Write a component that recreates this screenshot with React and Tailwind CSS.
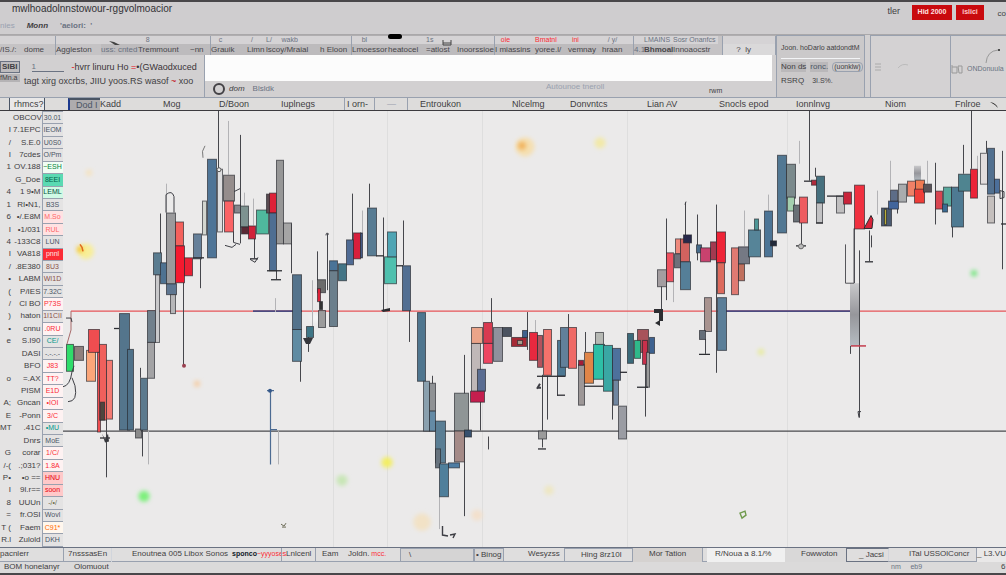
import clsx from 'clsx';

// [top label, main label, tone]
const tools = [
  ['', '/IS./:'],
  ['', 'dome'],
  ['', 'Aggleston'],
  ['', 'uss: cnted', 'faint'],
  ['    8', 'Tremmount'],
  ['', '~nn'],
  ['    c', 'Grauik'],
  ['  /', 'Limn'],
  ['L/     wakb', 'lscoy/Mraial'],
  ['', 'h Eloon'],
  ['     bl', 'Lmoessor'],
  ['', 'heatocel'],
  ['1s', '=atlost'],
  ['', 'Inoorssioe'],
  ['   oie', 'I miassins', 'red'],
  ['Bmatnl', 'yoree.l/', 'red'],
  ['  ini', 'vemnay', 'red'],
  ['   / y/', 'hraan'],
  ['', '4.1', 'faint'],
  ['LMAINS', 'Bhmoal', 'dark'],
  ['Sosr Onanfcs', 'Innoaocstr'],
  ['', '      ?  ly'],
];

const tabs = [
  { label: '' },
  { label: 'rhmcs?', look: 'border-x border-gray-600 pl-1 bg-[#e9e8e8]' },
  { label: '' },
  { label: 'Dod I', look: 'border-l-2 border-l-blue-900 border-t-2 border-t-gray-600 bg-[#aeacae] pl-1.5 leading-[10px] text-gray-600' },
  { label: 'Kadd' },
  { label: 'Mog' },
  { label: 'D/Boon' },
  { label: 'Iuplnegs' },
  { label: 'I orn-', look: 'border-x border-gray-400 pl-0.5 mr-3' },
  { label: '—', look: 'border-r border-gray-400 text-gray-400 mr-3' },
  { label: 'Entroukon' },
  { label: 'Nlcelmg' },
  { label: 'Donvntcs' },
  { label: 'Lian AV' },
  { label: 'Snocls epod' },
  { label: 'Ionnlnvg' },
  { label: 'Niom' },
  { label: 'Fnlroe' },
];

// [mark, name, value, tone]
const rows = [
  ['', 'OBCOV', '30.01', 'gray'],
  ['I', '7.1EPC', 'IEOM', 'gray'],
  ['/', 'S.E.0', 'U0S0', 'gray'],
  ['I', '7cdes', 'O/Pm', 'gray'],
  ['1', 'OV.188', '~ESH', 'lime'],
  ['', 'G_Doe', '8EEI', 'green'],
  ['4', '1 9•M', 'LEML', 'teal'],
  ['1', 'RI•N1,', 'B3S', 'gray'],
  ['6', '•/.E8M', 'M.So', 'pink'],
  ['I', '•1/031', 'RUL', 'pink'],
  ['4', '-133C8', 'LUN', 'gray'],
  ['I', 'VA818', 'pnnl', 'red'],
  ['/', '.8E380', '8U3', 'brown'],
  ['•', 'LABM', 'WI1D', 'brown'],
  ['(', 'P/IES', '7.32C', 'gray'],
  ['/', 'Cl BO', 'P73S', 'rose'],
  [')', 'haton', '1I1CII', 'brown'],
  ['•', 'cnnu', '.0RU', 'rose'],
  ['e', 'S.I90', 'CE/', 'teal2'],
  ['', 'DASI', '-.-.-.-', 'gray'],
  ['', 'BFO', 'J83', 'rose'],
  ['o', '=.AX', 'TT?', 'rose'],
  ['', 'PISM', 'E1D', 'rose'],
  ['A;', 'Gncan', '•IOI', 'rose'],
  ['E', '-Ponn', '3/C', 'rose'],
  ['MT', '.41C', '•MU', 'teal2'],
  ['', 'Dnrs', 'MoE', 'gray'],
  ['G', 'corar', '1/C/', 'rose'],
  ['/-(', '.;031?', '1.8A', 'rose'],
  ['P•', '•o ==', 'HNU', 'redbox'],
  ['I', '9l.r==', 'soon', 'redbox'],
  ['8', 'UUUn', '-/•/', 'olive'],
  ['=', 'fr.OSI', 'Wovl', 'gray'],
  ['T (', 'Faem', 'C91*', 'orange'],
  ['R.l', 'Zulold', 'DKH', 'gray'],
];

const tones = {
  gray: 'text-gray-600',
  lime: 'text-green-700 bg-green-50',
  green: 'text-emerald-800 bg-emerald-400/60',
  teal: 'text-emerald-900 bg-emerald-100',
  teal2: 'text-teal-600',
  pink: 'text-red-400 bg-red-100',
  red: 'text-red-100 bg-red-500',
  redbox: 'text-red-600 bg-red-200',
  rose: 'text-red-500 bg-red-50',
  brown: 'text-[#8a5048]',
  orange: 'text-orange-500 bg-orange-50',
  olive: 'text-[#6f6f48]',
};

const statusItems = [
  { label: 'pacnlerr' },
  { label: '7nsssasEn', look: 'border-l border-gray-400 pl-1' },
  { label: '', look: 'border-l border-gray-300' },
  { label: 'Enoutnea 005 Libox Sonos', extra: 'sponco', red: '~yyyoses' },
  { label: 'Lnlcenl', look: 'border-x border-gray-400 pl-1' },
  { label: 'Eam', look: 'pl-1.5' },
  { label: 'Joldn.', red: ' mcc.' },
  { label: '\\', look: 'border border-gray-400 pl-2 bg-[#d5d4d4]' },
  { label: '• Binog', look: 'border border-gray-400 pl-px bg-[#d5d4d4]' },
  { label: 'Wesyzss', look: 'pl-6' },
  { label: 'Hing 8rz10l', look: 'border-l border-t border-gray-400 pl-4' },
  { label: 'Mor Tation', look: 'border-x border-gray-400 pl-4 bg-[#d5d2d0]' },
  { label: 'R/Noua a 8.1/%', look: 'bg-[#f0f0f0] pl-2 ml-1' },
  { label: 'Fowwoton', look: 'pl-4 bg-[#d9d8d8]' },
  { label: '_ Jacsi', look: 'border border-gray-500 border-r-gray-300 pl-3' },
  { label: 'ITal USSOlConcr', look: 'pl-5' },
  { label: '_ L3.VU', look: 'border-l border-gray-400 bg-[#e9e8e8]' },
];

// [x, y, width, height, colour]
const candles = [
  [86, 350, 9, 31, '#fba679'], [88, 329, 11, 23, '#ef4d50'], [97, 352, 3, 80, '#ef4d50'], [99, 344, 7, 76, '#f0605c'],
  [106, 360, 6, 59, '#f47a72'], [100, 402, 4, 18, '#4d463e'], [66, 344, 7, 27, '#2fdc6a'], [74, 346, 9, 14, '#8f807d'],
  [119, 313, 10, 117, '#54758c'], [127, 349, 6, 81, '#4f7189'], [135, 429, 6, 9, '#8a8a8a'], [140, 378, 7, 52, '#5c7a8e'],
  [147, 310, 8, 32, '#71808c'], [147, 342, 7, 36, '#a3a3a5'], [155, 274, 4, 68, '#c9c9cb'],
  [153, 252, 8, 22, '#5a7c90'], [160, 262, 7, 21, '#4e7291'], [166, 283, 10, 11, '#5e7690'], [166, 212, 9, 71, '#9a9a9c'],
  [175, 221, 8, 24, '#f4615c'], [175, 245, 9, 37, '#f5192f'], [184, 257, 8, 18, '#ea2034'], [170, 294, 5, 19, '#b6b6b8'],
  [193, 233, 8, 25, '#66809a'], [202, 200, 4, 34, '#d3d6d0'], [207, 158, 9, 99, '#4f7597'], [217, 168, 5, 63, '#dededf'],
  [223, 174, 11, 26, '#958d8c'], [224, 200, 9, 31, '#fb6365'], [234, 204, 6, 8, '#85858b'], [240, 205, 8, 21, '#7d9290'],
  [241, 226, 7, 7, '#5a2a35'], [256, 209, 12, 24, '#4fb99d'], [248, 225, 7, 13, '#d0233a'], [266, 193, 3, 19, '#5a4a50'],
  [269, 192, 7, 20, '#dd2238'], [269, 212, 7, 58, '#4e6e92'], [276, 159, 7, 84, '#979797'], [283, 222, 8, 21, '#a5a5a5'],
  [292, 274, 9, 55, '#54738c'], [292, 329, 9, 32, '#5f8ba2'], [306, 326, 7, 11, '#3f7686'], [317, 279, 8, 13, '#6b6b6b'],
  [317, 288, 3, 13, '#dd2238'], [319, 301, 3, 8, '#333333'], [318, 310, 7, 17, '#9c9c9c'], [329, 260, 8, 10, '#4a7397'],
  [329, 270, 8, 56, '#6b7f8c'], [338, 263, 8, 17, '#437586'], [346, 239, 7, 25, '#4f6b94'], [353, 232, 7, 26, '#d81f3c'],
  [360, 232, 2, 25, '#465a86'], [367, 207, 9, 48, '#587c93'], [384, 256, 12, 27, '#4fc0ae'], [387, 231, 9, 25, '#4fa5b4'],
  [402, 265, 8, 45, '#526f92'], [417, 312, 8, 69, '#4f768f'], [423, 381, 6, 50, '#8aa0ae'], [429, 383, 6, 28, '#8f9295'],
  [429, 411, 6, 20, '#648aa5'], [435, 421, 10, 42, '#5a7e94'], [435, 449, 5, 19, '#66727d'], [448, 463, 11, 5, '#4f7da3'],
  [439, 464, 9, 33, '#4f7f9b'], [454, 393, 14, 38, '#8f9596'], [454, 431, 10, 31, '#a48a87'], [464, 430, 7, 7, '#37506e'],
  [471, 343, 9, 48, '#c0b8b8'], [471, 327, 11, 16, '#eba489'], [483, 322, 9, 21, '#d83a50'], [483, 343, 9, 20, '#ee4661'],
  [493, 327, 9, 34, '#8f919c'], [477, 369, 8, 22, '#5a6d92'], [470, 391, 14, 11, '#c41e4e'], [502, 327, 9, 9, '#4b5360'],
  [511, 337, 15, 9, '#a52a35'], [517, 340, 5, 4, '#a8a090'], [522, 330, 5, 7, '#3f628d'], [529, 332, 8, 28, '#e8293f'],
  [537, 335, 5, 32, '#b3525c'], [543, 329, 8, 46, '#f4726b'], [538, 431, 8, 8, '#9b9b9b'], [557, 340, 8, 36, '#4d7893'],
  [560, 327, 8, 40, '#62809a'], [568, 327, 8, 41, '#ef6a66'], [578, 364, 6, 41, '#9d9797'], [578, 360, 5, 5, '#a31c38'],
  [584, 352, 9, 31, '#e08548'], [595, 332, 8, 12, '#b6b9b4'], [593, 344, 11, 35, '#2dbfa6'], [603, 345, 9, 46, '#3aa7a4'],
  [612, 348, 8, 32, '#4d719c'], [613, 380, 5, 25, '#7086a0'], [618, 406, 8, 33, '#9a9ca3'], [627, 333, 6, 30, '#3b6a7a'],
  [637, 329, 11, 23, '#a8535a'], [634, 340, 6, 18, '#2fb98a'], [642, 340, 5, 24, '#c8304b'], [646, 352, 3, 35, '#9b9b9b'],
  [649, 337, 5, 16, '#3e6290'], [657, 269, 9, 17, '#a39da0'], [666, 252, 7, 29, '#ef5260'], [675, 238, 5, 15, '#ef8a7d'],
  [674, 253, 6, 14, '#70707a'], [680, 238, 9, 23, '#d2625f'], [683, 234, 8, 8, '#27284a'], [680, 261, 10, 28, '#557f98'],
  [696, 244, 5, 8, '#456a89'], [700, 247, 10, 14, '#c8426e'], [710, 241, 6, 18, '#a33a50'], [716, 231, 9, 31, '#ee2437'],
  [717, 262, 7, 31, '#dd6a5c'], [717, 297, 9, 53, '#5b7f99'], [704, 297, 7, 34, '#a8938f'], [699, 330, 6, 9, '#666f79'],
  [731, 247, 7, 47, '#e07a72'], [738, 263, 6, 17, '#c0705e'], [738, 246, 11, 17, '#757984'], [748, 229, 12, 27, '#568498'],
  [754, 218, 4, 11, '#4f9696'], [764, 210, 8, 46, '#4d7596'], [770, 240, 6, 5, '#222a3a'], [777, 154, 9, 78, '#527893'],
  [786, 163, 9, 34, '#7b8a8c'], [787, 196, 7, 14, '#a4cfae'], [793, 204, 6, 17, '#697076'], [799, 196, 8, 26, '#ee5c60'],
  [811, 179, 5, 5, '#b02a3b'], [816, 175, 8, 27, '#46707e'], [816, 202, 6, 20, '#c2c2c4'], [836, 195, 8, 17, '#c0bfc0'],
  [843, 191, 8, 12, '#c9243a'], [854, 184, 10, 44, '#f0303f'], [881, 207, 10, 18, '#4a5a70'], [884, 208, 2, 16, '#b9ae3a'],
  [888, 200, 10, 8, '#41659c'], [890, 189, 7, 11, '#5d6d88'], [898, 183, 8, 18, '#a9acae'], [907, 180, 8, 15, '#f08066'],
  [915, 179, 9, 13, '#f07a52'], [914, 188, 10, 14, '#ef3d38'], [923, 183, 8, 8, '#5a5358'], [935, 190, 7, 18, '#d84550'],
  [943, 186, 8, 19, '#58a89c'], [942, 203, 5, 8, '#3a6b92'], [951, 186, 12, 40, '#4e7a92'], [958, 173, 12, 17, '#4f8490'],
  [970, 168, 7, 29, '#ea2338'], [980, 152, 7, 31, '#e2dddd'], [987, 147, 7, 46, '#52708f'], [987, 195, 7, 27, '#c4bfbd'],
  [994, 178, 5, 14, '#4c6f9a'],
];

// [x, top, bottom]
const wicks = [
  [106, 420, 478], [142, 430, 457], [140, 368, 378], [160, 213, 262], [183, 282, 365], [200, 258, 288], [218, 110, 168],
  [240, 134, 243], [254, 238, 258], [276, 270, 279], [291, 223, 273], [300, 361, 382], [308, 337, 352], [317, 251, 280],
  [327, 233, 290], [352, 193, 240], [369, 183, 207], [383, 217, 310], [403, 220, 265], [409, 310, 342], [432, 376, 384],
  [464, 355, 517], [480, 402, 431], [488, 437, 450], [527, 312, 350], [542, 375, 448], [547, 376, 420], [568, 314, 327],
  [585, 332, 352], [612, 380, 420], [645, 364, 417], [666, 218, 300], [685, 202, 235], [697, 214, 260], [716, 204, 373],
  [705, 339, 354], [801, 222, 245], [809, 110, 180], [815, 167, 176], [859, 250, 418], [854, 228, 283], [869, 230, 261],
  [871, 235, 247], [935, 162, 224], [963, 144, 173], [971, 110, 168], [1002, 150, 269], [850, 283, 354], [661, 286, 320],
  [491, 298, 322], [557, 376, 396], [952, 226, 237], [897, 200, 213], [986, 140, 152],
];

const faintWicks = [
  [166, 183, 283], [228, 120, 174], [253, 198, 225], [244, 192, 205], [312, 280, 326], [362, 210, 232], [275, 298, 312],
  [535, 320, 332], [673, 281, 302], [799, 140, 163], [877, 190, 214], [890, 160, 189], [927, 160, 183], [977, 155, 168],
  [278, 431, 465], [148, 431, 465], [439, 497, 530], [768, 194, 210], [744, 210, 246],
];

const ticks = [
  [250, 258, 258], [271, 281, 279], [699, 710, 354], [804, 812, 180], [796, 806, 245], [865, 873, 261], [827, 843, 195],
  [396, 403, 265], [100, 110, 438], [538, 546, 449], [557, 565, 395], [537, 565, 376], [637, 648, 387], [816, 823, 222],
  [114, 119, 328], [193, 204, 257], [376, 384, 255], [584, 603, 386], [620, 627, 372], [267, 282, 270], [1001, 1006, 223],
];

const glows = [
  [525, 146, 12, '#f5dfb0'], [522, 145, 5, '#f1b25c'], [600, 142, 7, '#f2e9a8'], [86, 251, 10, '#f8ee98'], [80, 249, 4, '#f6c62c'],
  [144, 497, 7, '#7cf07a'], [342, 481, 7, '#c8e6b6'], [387, 463, 7, '#f3ee63'], [422, 523, 11, '#f2e2c6'], [477, 516, 7, '#f3e0cc'],
  [549, 491, 6, '#eee7c2'], [974, 273, 4, '#78e683'], [761, 352, 4, '#e7eb9c'], [89, 172, 4, '#f5e3c0'], [197, 384, 4, '#f5cfa8'],
  [316, 318, 6, '#f6f6f6'],
];

function Chart() {
  return (
    <svg
      viewBox="63 110 943 438"
      preserveAspectRatio="none"
      className="block h-full w-full bg-[#ebeaea]"
      role="img"
      aria-label="Candles"
    >
      <defs>
        <filter id="soft" x="-50%" y="-50%" width="200%" height="200%">
          <feGaussianBlur stdDeviation="2" />
        </filter>
        <linearGradient id="fade" x1="0" y1="0" x2="0" y2="1">
          <stop offset="0" stopColor="#c9c9cb" />
          <stop offset="0.5" stopColor="#96969b" />
          <stop offset="1" stopColor="#b5bcc2" />
        </linearGradient>
      </defs>

      {[333, 387, 482, 627, 787].map((x) => (
        <line key={x} x1={x + 0.5} x2={x + 0.5} y1="110" y2="548" stroke="#dedede" />
      ))}
      {glows.map(([x, y, r, fill], i) => (
        <circle key={i} cx={x} cy={y} r={r * 0.8} fill={fill} filter="url(#soft)" />
      ))}

      {/* Price levels */}
      <path d="M63 431.5H1006" stroke="#4a4a4e" strokeWidth="1.2" />
      <path d="M71 311H1006" stroke="#e65558" strokeWidth="1.4" />
      <path d="M253 311H302M725 311H852" stroke="#4b4a80" strokeWidth="1.6" />
      <path d="M71 311V330L67 344" stroke="#a86a6a" fill="none" />

      {faintWicks.map(([x, y1, y2], i) => (
        <line key={i} x1={x + 0.5} x2={x + 0.5} y1={y1} y2={y2} stroke="#b3b3b6" />
      ))}
      {wicks.map(([x, y1, y2], i) => (
        <line key={i} x1={x + 0.5} x2={x + 0.5} y1={y1} y2={y2} stroke="#45464b" />
      ))}

      {/* Faded bars */}
      <rect x="850" y="283" width="9" height="63" fill="url(#fade)" />
      <rect x="914" y="165" width="7" height="15" fill="url(#fade)" />
      <path d="M845.5 244V283H854V228" fill="none" stroke="#55555a" />
      <path d="M851 346H866" stroke="#c43b4c" strokeWidth="1.5" />

      {candles.map(([x, y, w, h, fill], i) => (
        <rect key={i} x={x + 0.5} y={y + 0.5} width={w} height={h} fill={fill} stroke="#25272d" strokeOpacity="0.65" />
      ))}
      {ticks.map(([x1, x2, y], i) => (
        <line key={i} x1={x1} x2={x2} y1={y + 0.5} y2={y + 0.5} stroke="#2d2e33" strokeWidth="1.3" />
      ))}

      {/* Hand drawn marks */}
      <g fill="none" stroke="#3d3e44">
        <path d="M166 212V194Q172 189 174 196V212" />
        <path d="M233.5 231V242L240 244M234 191L240 188" />
        <path d="M203 157Q201 150 205 145" stroke="#777" />
        <path d="M63 387Q70 386 72 372L74 366M68 402Q78 402 75 386L72 378" />
        <path d="M66 318H71L72 322M326 235Q326 231 329 234M685 204L686 201M859 418L858 412L861 412" />
        <path d="M442.5 527V536L448 537M450 536L455 535L453 539" strokeWidth="1.4" />
        <path d="M281 525L284 527L286 524M282 528H286" stroke="#6a6a55" />
        <path d="M740 514L745 512L746 516L742 519Z" stroke="#6f9a4c" strokeWidth="1.4" />
        <path d="M270.5 392V465M270 430H277M267 391H274" stroke="#4c6b92" strokeWidth="1.2" />
        <path d="M250 259L255 262L258 257M225 245L232 247L236 244" />
        <path d="M537 389L540 384M538 388H541" strokeWidth="2" />
        <path d="M1000 198V190L1004 191V197Z" />
      </g>
      <path d="M864 228L871 215L873 219L872 228Z" fill="#d92339" stroke="#2a2a2e" />
      <circle cx="184" cy="366" r="2" fill="#9a4050" />
      <circle cx="219" cy="169" r="2" fill="#eeeeee" stroke="#555" />
      <circle cx="270" cy="391" r="2" fill="#35588a" />
      <circle cx="801" cy="246" r="2.5" fill="#bbb" stroke="#666" />
      <path d="M80 244L82 247L83 251" fill="none" stroke="#e06a1c" strokeWidth="1.5" />
      <path d="M654 309H663V321H659V313H654ZM655 323L660 320V326ZM381 310L390 308V311L383 312Z" fill="#2c2d31" />
      <path d="M102 434L105 440L108 434L109 442L105 443ZM303 338H313L310 344H306Z" fill="#36373c" />
    </svg>
  );
}

function StatusCell({ item }) {
  return (
    <span className={clsx('min-w-0 whitespace-pre text-[8px] leading-3', item.look)}>
      {item.label}
      {item.extra && <b className="ml-1 text-[7px] text-gray-900">{item.extra}</b>}
      {item.red && <span className="text-[7px] text-red-500">{item.red}</span>}
    </span>
  );
}

export default function App() {
  return (
    <div className="flex min-h-screen flex-col overflow-hidden border-y-2 border-[#49474a] bg-[#d2d0d1] font-['Liberation_Sans',sans-serif] text-[#3f3e42]">
      {/* Title bar */}
      <header className="flex h-[33px] justify-between border-b border-[#aaa8aa] bg-[#cfcdcf]">
        <div>
          <h1 className="pl-3 text-[10px] leading-[14px] text-[#333236]">mwlhoadolnnstowour-rggvolmoacior</h1>
          <nav className="flex gap-3 pt-1 text-[8px] leading-3">
            <a href="#view" className="text-gray-400">nies</a>
            <a href="#home" className="font-bold italic">Monn</a>
            <a href="#series" className="font-bold text-gray-500">'aelori: &nbsp;'</a>
          </nav>
        </div>
        <div className="flex items-start gap-1 pt-[3px]">
          <span className="mr-2 text-[9px] leading-3">tler</span>
          <button className="h-[15px] w-10 bg-[#c90a0e] text-[7px] font-bold text-red-100">Hid 2000</button>
          <button className="h-[15px] w-7 bg-[#c90a0e] text-[7px] font-bold text-red-200">islici</button>
          <span className="w-[18px] pt-px text-right text-[8px] leading-4">co</span>
        </div>
      </header>

      {/* Toolbars */}
      <div className="grid h-[62px] grid-cols-[776fr_89fr_5fr_80fr_56fr]">
        <div className="flex min-w-0 flex-col">
          <div className="relative grid h-5 grid-cols-[24fr_31fr_46fr_37fr_52fr_20fr_37fr_19fr_54fr_31fr_37fr_38fr_31fr_37fr_41fr_33fr_34fr_31fr_11fr_29fr_45fr_58fr] border-t border-[#b0aeb0] bg-[#c5c3c5]">
            {tools.map(([top, label, tone], i) => (
              <div key={i} className={clsx('min-w-0 whitespace-pre', i % 4 === 2 && 'border-l border-gray-400', i > 2 && i < 20 && 'bg-[#bdbbbd]', i === 21 && 'ml-1 border-x border-gray-400 bg-[#dad9da]')}>
                <div className={clsx('h-2 bg-[#d5d3d5] text-[7px] leading-2', tone === 'red' ? 'text-red-500' : 'text-gray-500')}>{top}</div>
                <div className={clsx('text-[8px] leading-[11px]', tone === 'faint' ? 'text-gray-500' : 'text-[#48464a]', tone === 'dark' && 'text-[7px] font-bold')}>{label}</div>
              </div>
            ))}
            <svg className="absolute top-1 left-[14%] h-1.5 w-3" viewBox="0 0 12 6"><path d="M0 1L5 2L11 5L6 5Z" fill="#444" /></svg>
            <span className="absolute -top-0.5 left-1/2 h-[5px] w-3.5 rounded-sm bg-black" />
            <svg className="absolute top-1 left-[57%] h-1.5 w-2.5" viewBox="0 0 10 6"><path d="M1 0V5H9V0M1 3H9" fill="none" stroke="#444" /></svg>
          </div>
          <div className="grid flex-1 grid-cols-[205fr_571fr]">
            <div className="min-w-0 border-r border-gray-400 whitespace-nowrap">
              <div className="flex items-center gap-2 pt-1.5 text-[9px] leading-3">
                <span className="border border-gray-500 bg-[#bdbbbd] px-px text-[8px] leading-[10px] font-bold">SIBI</span>
                <span className="ml-1 w-8 border-b border-gray-500 text-[8px] leading-2 text-gray-500">1</span>
                <span className="text-[#3b3438]"><span className="text-red-600">-</span>hvrr linuru Ho <span className="text-red-600">=</span>•(GWaodxuced</span>
              </div>
              <div className="flex gap-1 pt-px text-[9px] leading-[14px]">
                <span className="w-5 self-start bg-[#b5b3b5] text-[7px] leading-2">fMn.a</span>
                <span>tagt xirg oxcrbs, JIIU yoos.RS wasof <span className="text-red-700">~</span> xoo</span>
              </div>
            </div>
            <div className="min-w-0">
              <input type="text" aria-label="Search" className="block h-[26px] w-full border-r-4 border-[#d2d0d1] bg-[#fcfcfc] px-2 text-xs outline-none" />
              <div className="grid grid-cols-[341fr_163fr_67fr] text-[8px] leading-[14px]">
                <label className="flex min-w-0 items-center gap-1 pl-2 italic">
                  <input type="radio" className="m-0 h-3 w-3 appearance-none rounded-full border-2 border-[#444246]" />
                  dom <span className="ml-1 text-gray-500 not-italic">Blsldk</span>
                </label>
                <span className="min-w-0 leading-3 text-gray-400">Autounoe tneroll</span>
                <span className="min-w-0 pt-1 text-[7px] leading-3">rwm</span>
              </div>
            </div>
          </div>
        </div>

        <div className="min-w-0 border-x border-t border-gray-400 bg-[#cbc9ca] px-1 pt-1.5 text-[8px] whitespace-nowrap">
          <div className="text-[7px] leading-3">Joon. hoDarlo aatdondtM</div>
          <div className="mt-1 h-px bg-gray-100" />
          <div className="mt-[3px] flex gap-1 leading-[10px]">
            <button className="w-[26px] bg-[#bab8ba] text-left">Non ds</button>
            <button className="w-5 bg-[#bab8ba] text-left text-gray-600">ronc.</button>
            <button className="rounded-sm border border-gray-400 px-px text-[7px] leading-2">(uonklw)</button>
          </div>
          <div className="flex gap-2 pt-1 leading-[10px]">
            <span>RSRQ</span>
            <span className="text-[7px]">3I.S%.</span>
          </div>
        </div>
        <div />
        <div className="flex min-w-0 items-center gap-4 border-t border-l border-gray-400 bg-[#d4d2d3] pl-1 text-gray-400">
          <svg className="h-2 w-1.5" viewBox="0 0 6 8"><path d="M0 1H6M0 4H6M0 7H6" stroke="#aaa" /></svg>
          <svg className="h-2 w-3" viewBox="0 0 12 8"><path d="M1 5Q5 0 11 2" fill="none" stroke="#bbb" /></svg>
        </div>
        <div className="min-w-0 border-t border-l border-gray-400 bg-[#d4d2d3] text-[7px] text-gray-500">
          <svg className="mt-3 ml-8 h-4 w-[18px]" viewBox="0 0 18 16">
            <path d="M3 15Q4 3 15 2" fill="none" stroke="#999" />
            <circle cx="16" cy="2" r="1" fill="#222" />
          </svg>
          <div className="flex items-center gap-1 whitespace-nowrap">
            <svg className="h-2.5 w-3 shrink-0" viewBox="0 0 12 10"><path d="M1 1V9H6V3H1M7 2H11V9H8Z" fill="none" stroke="#999" /></svg>
            ONDonuula
          </div>
        </div>
      </div>

      {/* Column tabs */}
      <div className="relative grid h-3.5 grid-cols-[9fr_36fr_23fr_32fr_63fr_56fr_62fr_63fr_43fr_33fr_92fr_58fr_77fr_72fr_77fr_89fr_70fr_51fr] border-t border-b border-t-gray-400 border-b-[#3c3b3f] bg-[#dddcdb] text-[9px] leading-3">
        {tabs.map((tab, i) => (
          <span key={i} className={clsx('min-w-0 whitespace-nowrap', tab.look)}>{tab.label}</span>
        ))}
        <svg className="absolute top-1 right-2 h-1.5 w-2" viewBox="0 0 8 6"><path d="M0 0Q6 1 8 6L5 3Z" fill="#222" /></svg>
      </div>

      {/* Price list and chart */}
      <main className="grid flex-1 grid-cols-[63px_1fr]">
        <table className="h-full w-full table-fixed border-collapse border-r border-gray-400 bg-[#e4e3e3]">
          <colgroup>
            <col className="w-[13px]" />
            <col className="w-[29px]" />
            <col className="w-[21px]" />
          </colgroup>
          <tbody>
            {rows.map(([mark, name, value, tone], i) => (
              <tr key={i}>
                <td className="p-0 pr-0.5 text-right text-[8px] leading-[10px] whitespace-nowrap">{mark}</td>
                <td className="p-0 pr-px text-right text-[8px] leading-[10px] whitespace-nowrap">{name}</td>
                <td className={clsx('border border-gray-400 p-0 text-center text-[7px] leading-[10px] whitespace-nowrap', tones[tone])}>{value}</td>
              </tr>
            ))}
          </tbody>
        </table>
        <div className="relative min-h-[436px] min-w-0">
          <div className="absolute inset-0">
            <Chart />
          </div>
        </div>
      </main>

      {/* Status bars */}
      <footer className="border-t border-gray-500">
        <div className="grid h-3.5 grid-cols-[63fr_48fr_21fr_149fr_35fr_32fr_52fr_74fr_30fr_60fr_68fr_71fr_82fr_61fr_43fr_87fr_30fr] border-b border-gray-400 bg-[#dfdede]">
          {statusItems.map((item, i) => (
            <StatusCell key={i} item={item} />
          ))}
        </div>
        <div className="grid h-[11px] grid-cols-[74fr_817fr_110fr_5fr] bg-[#dbdada] text-[8px] leading-[10px] whitespace-nowrap">
          <span className="min-w-0 pl-1">BOM honelanyr</span>
          <span className="min-w-0">Olomuout</span>
          <span className="min-w-0 text-[7px] text-gray-500">nm &nbsp; &nbsp; eb9</span>
          <span className="min-w-0">6</span>
        </div>
      </footer>
    </div>
  );
}
